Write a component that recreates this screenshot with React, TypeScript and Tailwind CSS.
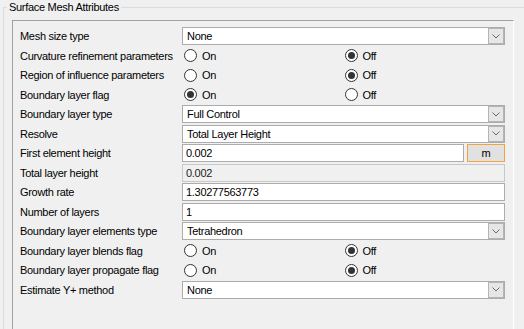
import React from "react";

type Row =
  | { label: string; kind: "combo"; value: string }
  | { label: string; kind: "radio"; on: boolean }
  | { label: string; kind: "text"; value: string }
  | { label: string; kind: "unit"; value: string; unit: string }
  | { label: string; kind: "disabled"; value: string };

const rows: Row[] = [
  { label: "Mesh size type", kind: "combo", value: "None" },
  { label: "Curvature refinement parameters", kind: "radio", on: false },
  { label: "Region of influence parameters", kind: "radio", on: false },
  { label: "Boundary layer flag", kind: "radio", on: true },
  { label: "Boundary layer type", kind: "combo", value: "Full Control" },
  { label: "Resolve", kind: "combo", value: "Total Layer Height" },
  { label: "First element height", kind: "unit", value: "0.002", unit: "m" },
  { label: "Total layer height", kind: "disabled", value: "0.002" },
  { label: "Growth rate", kind: "text", value: "1.30277563773" },
  { label: "Number of layers", kind: "text", value: "1" },
  { label: "Boundary layer elements type", kind: "combo", value: "Tetrahedron" },
  { label: "Boundary layer blends flag", kind: "radio", on: false },
  { label: "Boundary layer propagate flag", kind: "radio", on: false },
  { label: "Estimate Y+ method", kind: "combo", value: "None" },
];

function Radio({ checked, label }: { checked: boolean; label: string }) {
  return (
    <div className="flex w-[161px] items-center gap-[5px]">
      <span className="flex h-[13px] w-[13px] items-center justify-center rounded-full border border-[#333333] bg-white">
        {checked && <span className="h-[7px] w-[7px] rounded-full bg-[#333333]" />}
      </span>
      <span>{label}</span>
    </div>
  );
}

function Combo({ value }: { value: string }) {
  return (
    <div className="flex h-[18px] w-full items-stretch border border-[#acacac] bg-white">
      <div className="flex flex-1 items-center pl-[4px]">{value}</div>
      <div className="flex w-[16px] items-center justify-center border border-[#b4b4b4] bg-[#e6e6e6]">
        <svg width="8" height="5" viewBox="0 0 8 5">
          <polyline points="0.5,0.5 4,4 7.5,0.5" fill="none" stroke="#6a6a6a" strokeWidth="1" />
        </svg>
      </div>
    </div>
  );
}

function Control({ row }: { row: Row }) {
  switch (row.kind) {
    case "combo":
      return <Combo value={row.value} />;
    case "radio":
      return (
        <div className="flex pl-[2px]">
          <Radio checked={row.on} label="On" />
          <Radio checked={!row.on} label="Off" />
        </div>
      );
    case "text":
      return (
        <div className="flex h-[18px] items-center border border-[#acacac] bg-white pl-[3px]">
          {row.value}
        </div>
      );
    case "disabled":
      return (
        <div className="flex h-[18px] items-center border border-[#c8c8c8] bg-[#f0f0f0] pl-[3px] text-[#222222]">
          {row.value}
        </div>
      );
    case "unit":
      return (
        <div className="flex h-[18px] gap-[3px]">
          <div className="flex flex-1 items-center border border-[#acacac] bg-white pl-[3px]">
            {row.value}
          </div>
          <div className="flex w-[38px] items-center justify-center border border-[#f3a23f] bg-[#e1e1e1]">
            {row.unit}
          </div>
        </div>
      );
  }
}

export default function App() {
  return (
    <div className="h-[329px] w-[524px] overflow-hidden bg-[#f0f0f0] font-['Liberation_Sans',Arial,sans-serif] text-[11px] leading-[14px] tracking-[-0.3px] text-black">
      <fieldset className="ml-[3px] h-[340px] w-[540px] border border-[#dcdcdc]">
        <legend className="ml-[3px] px-[2px]">Surface Mesh Attributes</legend>

        {/* inner panel */}
        <div className="ml-[8px] mt-[6px] h-[320px] w-[502px] border-l border-t border-r border-l-[#a0a0a0] border-t-[#a0a0a0] border-r-white pt-[5.25px] pl-[7px]">
          {rows.map((row) => (
            <div key={row.label} className="grid h-[19.5px] grid-cols-[162px_323px] items-center">
              <div>{row.label}</div>
              <Control row={row} />
            </div>
          ))}
        </div>
      </fieldset>
    </div>
  );
}
